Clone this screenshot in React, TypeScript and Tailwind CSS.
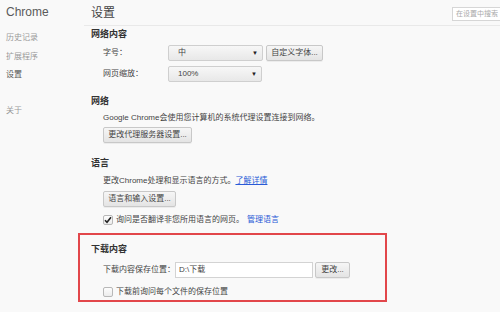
import React from 'react';

const font = "font-['Liberation_Sans','Noto_Sans_CJK_SC',sans-serif]";

const Btn = ({ label, w }: { label: string; w: string }) => (
    <div
        className={`${w} h-[16px] flex items-center justify-center rounded-[2px] border border-[#c8c8c8] bg-gradient-to-b from-[#f6f6f6] to-[#e4e4e4] text-[8px] text-[#444] shadow-[0_1px_0_rgba(0,0,0,0.05)]`}
    >
        {label}
    </div>
);

const Select = ({ value, w }: { value: string; w: string }) => (
    <div
        className={`${w} h-[16px] flex items-center justify-between pl-[9px] pr-[4px] rounded-[2px] border border-[#cfcfcf] bg-gradient-to-b from-[#f7f7f7] to-[#e8e8e8] text-[8px] text-[#444]`}
    >
        <span>{value}</span>
        <span className="text-[6px] text-[#222]">▼</span>
    </div>
);

const Checkbox = ({ checked }: { checked?: boolean }) => (
    <div className="w-[10px] h-[10px] flex items-center justify-center rounded-[2px] border border-[#b8b8b8] bg-gradient-to-b from-[#fdfdfd] to-[#ececec]">
        {checked && (
            <svg width="8" height="8" viewBox="0 0 8 8">
                <path d="M1 4.2 L3 6.3 L7 1.2" stroke="#222" strokeWidth="1.6" fill="none" />
            </svg>
        )}
    </div>
);

const Heading = ({ children, className = '' }: { children: React.ReactNode; className?: string }) => (
    <div className={`h-[12px] leading-[12px] text-[9px] font-bold text-[#333] ${className}`}>{children}</div>
);

export default function App() {
    return (
        <div className={`w-[500px] h-[312px] overflow-hidden bg-[#f9f9f9] flex ${font}`}>
            {/* Sidebar */}
            <aside className="w-[78px] shrink-0 pl-[6px]">
                <div className="h-[25px] pt-[4px] text-[12px] leading-[16px] text-[#5a5a5a]">Chrome</div>
                <ul className="text-[8px] text-[#999]">
                    <li className="mt-[8px] h-[10px] leading-[10px]">历史记录</li>
                    <li className="mt-[9px] h-[10px] leading-[10px]">扩展程序</li>
                    <li className="mt-[8px] h-[10px] leading-[10px] text-[#555]">设置</li>
                    <li className="mt-[26px] h-[10px] leading-[10px]">关于</li>
                </ul>
            </aside>

            {/* Main */}
            <main className="flex-1 flex flex-col overflow-hidden">
                <div className="h-[26px] flex items-start justify-between border-b border-[#e9e9e9] ml-[6px]">
                    <div className="pl-[7px] pt-[5px] text-[12px] leading-[16px] text-[#444]">设置</div>
                    <div className="mt-[7px] -mr-[8px] w-[56px] shrink-0 h-[14px] border border-[#d6d6d6] bg-white pl-[3px] text-[7px] leading-[12px] text-[#aaa] whitespace-nowrap overflow-hidden">
                        在设置中搜索
                    </div>
                </div>

                <div className="px-[13px] text-[8px] text-[#444]">
                    {/* 网络内容 */}
                    <Heading className="mt-[2px]">网络内容</Heading>
                    <div className="pl-[12px]">
                        <div className="mt-[5px] flex items-center">
                            <span className="w-[65px]">字号：</span>
                            <Select value="中" w="w-[95px]" />
                            <div className="ml-[3px]">
                                <Btn label="自定义字体..." w="w-[57px]" />
                            </div>
                        </div>
                        <div className="mt-[5px] flex items-center">
                            <span className="w-[65px]">网页缩放：</span>
                            <Select value="100%" w="w-[94px]" />
                        </div>
                    </div>

                    {/* 网络 */}
                    <Heading className="mt-[13px]">网络</Heading>
                    <div className="pl-[12px]">
                        <div className="mt-[6px] h-[10px] leading-[10px] whitespace-nowrap">
                            Google Chrome会使用您计算机的系统代理设置连接到网络。
                        </div>
                        <div className="mt-[4px]">
                            <Btn label="更改代理服务器设置..." w="w-[89px]" />
                        </div>
                    </div>

                    {/* 语言 */}
                    <Heading className="mt-[14px]">语言</Heading>
                    <div className="pl-[12px]">
                        <div className="mt-[7px] h-[10px] leading-[10px] whitespace-nowrap">
                            更改Chrome处理和显示语言的方式。
                            <span className="text-[#2a5bd7] underline">了解详情</span>
                        </div>
                        <div className="mt-[5px]">
                            <Btn label="语言和输入设置..." w="w-[73px]" />
                        </div>
                        <div className="mt-[8px] h-[10px] flex items-center gap-[3px] whitespace-nowrap">
                            <Checkbox checked />
                            <span>询问是否翻译非您所用语言的网页。</span>
                            <span className="text-[#2a5bd7]">管理语言</span>
                        </div>
                    </div>

                    {/* 下载内容 (highlighted) */}
                    <section className="mt-[8px] -ml-[13px] w-[309px] h-[69px] border-2 border-[#e2474b] pl-[11px]">
                        <Heading className="mt-[8px]">下载内容</Heading>
                        <div className="pl-[12px]">
                            <div className="mt-[7px] flex items-center">
                                <span className="w-[72px]">下载内容保存位置：</span>
                                <div className="w-[138px] h-[16px] flex items-center pl-[3px] border border-[#d3d3d3] bg-white text-[8px] text-[#444]">
                                    D:\下载
                                </div>
                                <div className="ml-[2px]">
                                    <Btn label="更改..." w="w-[35px]" />
                                </div>
                            </div>
                            <div className="mt-[9px] h-[10px] flex items-center gap-[3px] whitespace-nowrap">
                                <Checkbox />
                                <span>下载前询问每个文件的保存位置</span>
                            </div>
                        </div>
                    </section>
                </div>
            </main>
        </div>
    );
}
